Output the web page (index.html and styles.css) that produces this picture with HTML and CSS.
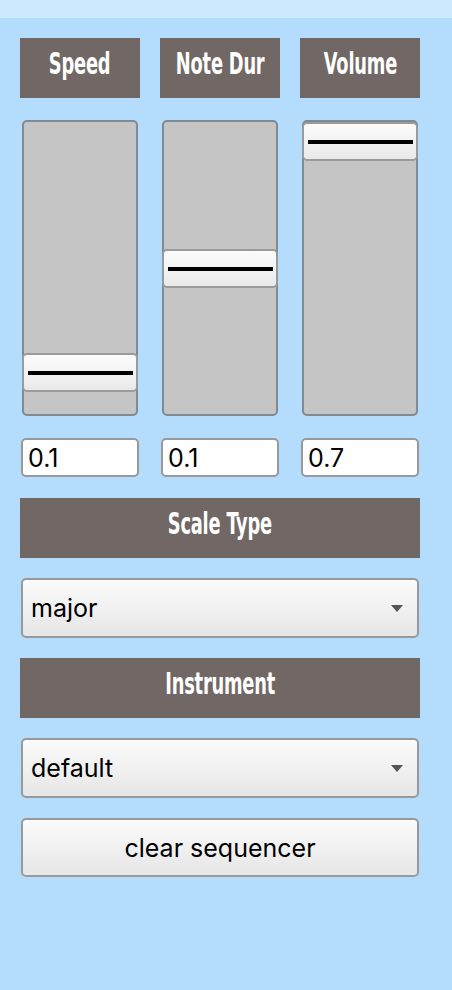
FILE: index.html
```html
<!DOCTYPE html>
<html>
<head>
<meta charset="utf-8">
<link rel="stylesheet" href="styles.css">
</head>
<body>
<div class="topbar"></div>
<div class="panel">
  <div class="row3 labels">
    <div class="label"><span class="cond">Speed</span></div>
    <div class="label"><span class="cond">Note Dur</span></div>
    <div class="label"><span class="cond">Volume</span></div>
  </div>
  <div class="row3 sliders">
    <div class="track"><div class="thumb" style="top:231px"><span class="grip"></span></div></div>
    <div class="track"><div class="thumb" style="top:127px"><span class="grip"></span></div></div>
    <div class="track"><div class="thumb" style="top:0px"><span class="grip"></span></div></div>
  </div>
  <div class="row3 values">
    <input class="num" type="text" value="0.1">
    <input class="num" type="text" value="0.1">
    <input class="num" type="text" value="0.7">
  </div>
  <div class="label wide"><span class="cond">Scale Type</span></div>
  <div class="select"><span>major</span><span class="caret"></span></div>
  <div class="label wide"><span class="cond">Instrument</span></div>
  <div class="select"><span>default</span><span class="caret"></span></div>
  <button class="btn">clear sequencer</button>
</div>
</body>
</html>
```
FILE: styles.css
```css
html, body {
  margin: 0;
  padding: 0;
}
body {
  background: #b4dcfd;
  min-height: 990px;
  font-family: Inter, "Liberation Sans", sans-serif;
}
.topbar {
  height: 18px;
  background: #cde9fd;
}
.panel {
  width: 400px;
  padding: 20px 0 0 20px;
  display: flex;
  flex-direction: column;
}
.row3 {
  display: grid;
  grid-template-columns: 120px 120px 120px;
  column-gap: 20px;
}
.label {
  height: 60px;
  box-sizing: border-box;
  padding-bottom: 9px;
  background: #716866;
  color: #fff;
  display: flex;
  align-items: center;
  justify-content: center;
  overflow: hidden;
}
.cond {
  display: inline-block;
  font-family: "DejaVu Sans Condensed", "DejaVu Sans", sans-serif;
  font-stretch: condensed;
  font-weight: bold;
  font-size: 30px;
  transform: scaleX(0.66);
  white-space: nowrap;
  letter-spacing: -0.3px;
}
.sliders {
  margin-top: 22px;
}
.track {
  position: relative;
  margin: 0 2px;
  height: 296px;
  box-sizing: border-box;
  background: #c5c5c5;
  border: 2px solid #7f8a93;
  border-radius: 5px;
}
.thumb {
  position: absolute;
  left: -2px;
  right: -2px;
  height: 39px;
  box-sizing: border-box;
  border: 2px solid #9a9a9a;
  border-radius: 5px;
  background: linear-gradient(#fcfcfc, #e9e9e9);
  display: flex;
  align-items: center;
  padding: 0 2px 0 2px;
}
.grip {
  display: block;
  flex: 1;
  height: 4px;
  background: #000;
  margin: 0 1px 0 2px;
}
.values {
  margin-top: 22px;
}
.num {
  margin: 0 0 0 1px;
  width: 118px;
  height: 39px;
  box-sizing: border-box;
  border: 2px solid #999;
  border-radius: 5px;
  background: #fff;
  padding: 0 5px;
  font-family: Inter, "Liberation Sans", sans-serif;
  font-size: 25px;
  color: #000;
}
.wide {
  margin-top: 21px;
  width: 400px;
}
.select, .btn {
  margin: 20px 0 0 1px;
  width: 398px;
  height: 60px;
  box-sizing: border-box;
  border: 2px solid #999;
  border-radius: 5px;
  background: linear-gradient(#fbfbfb, #e6e6e6);
  font-family: Inter, "Liberation Sans", sans-serif;
  font-size: 25px;
  color: #000;
}
.select {
  display: flex;
  align-items: center;
  justify-content: space-between;
  padding: 0 14px 0 8px;
}
.select + .label {
  margin-top: 20px;
}
.caret {
  width: 0;
  height: 0;
  border-left: 6px solid transparent;
  border-right: 6px solid transparent;
  border-top: 7px solid #555;
}
.btn {
  display: block;
  height: 59px;
  padding: 0;
  text-align: center;
  font-size: 25px;
}
```
